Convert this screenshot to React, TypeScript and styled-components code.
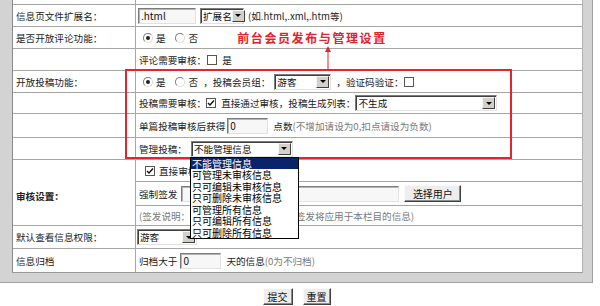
import React from 'react';
import styled, { createGlobalStyle } from 'styled-components';

const GlobalStyle = createGlobalStyle`
  html, body {
    margin: 0;
    padding: 0;
    background: #fff;
  }
  body {
    font-family: "Noto Sans CJK SC", "Liberation Sans", sans-serif;
    font-size: 9.6px;
    color: #222;
  }
`;

const Frame = styled.div`
  position: relative;
  width: 593px;
  box-sizing: border-box;
  background: #d3d3d3;
  padding: 0 9px 9px 12px;
  border-right: 1px solid #a0a0a0;
  border-bottom: 1px solid #a0a0a0;
`;

const Table = styled.div`
  background: #fff;
  border-left: 1px solid #8a8a8a;
  border-right: 1px solid #b0b0b0;
  border-bottom: 1px solid #9a9a9a;
`;

const Row = styled.div<{ $h: number }>`
  display: grid;
  grid-template-columns: 123px 1fr;
  box-sizing: border-box;
  height: ${(p) => p.$h}px;
  border-bottom: 1px solid #a6a6a6;

  &:last-child {
    border-bottom: none;
  }
`;

const LabelCell = styled.div<{ $bold?: boolean }>`
  display: flex;
  align-items: center;
  padding: ${(p) => (p.$bold ? '6px 0 0 3px' : '0 0 0 3px')};
  border-right: 1px solid #a6a6a6;
  font-weight: ${(p) => (p.$bold ? 'bold' : 'normal')};
  white-space: nowrap;
`;

const ValueCell = styled.div`
  display: flex;
  align-items: center;
  padding-left: 2px;
  white-space: nowrap;
  min-width: 0;
`;

const StackCell = styled.div`
  display: flex;
  flex-direction: column;
`;

const SubRow = styled.div<{ $h: number; $last?: boolean }>`
  display: flex;
  align-items: center;
  box-sizing: border-box;
  height: ${(p) => p.$h}px;
  padding-left: 2px;
  white-space: nowrap;
  border-bottom: ${(p) => (p.$last ? 'none' : '1px solid #a6a6a6')};
`;

const Text = styled.span<{ $ml?: number; $muted?: boolean }>`
  margin-left: ${(p) => p.$ml ?? 0}px;
  color: ${(p) => (p.$muted ? '#7a7a7a' : '#222')};
`;

const Title = styled.span<{ $ml: number }>`
  margin-left: ${(p) => p.$ml}px;
  color: #e2232b;
  font-size: 12px;
  font-weight: bold;
  letter-spacing: 1.6px;
`;

const TextBox = styled.input<{ $w: number; $ml?: number }>`
  box-sizing: border-box;
  width: ${(p) => p.$w}px;
  height: 16px;
  margin: 0 0 0 ${(p) => p.$ml ?? 0}px;
  padding: 0 2px;
  border: 1px solid;
  border-color: #7c7c7c #e2e2e2 #e2e2e2 #7c7c7c;
  box-shadow: inset 1px 1px 0 #b4b4b4;
  background: #f7f7f7;
  font-family: inherit;
  font-size: 10px;
  color: #111;
  outline: none;
`;

const SelectBox = styled.div<{ $w: number; $ml?: number }>`
  position: relative;
  display: inline-flex;
  align-items: center;
  box-sizing: border-box;
  width: ${(p) => p.$w}px;
  height: 16px;
  margin-left: ${(p) => p.$ml ?? 0}px;
  padding-left: 2px;
  background: #fff;
  border: 1px solid;
  border-color: #7c7c7c #e2e2e2 #e2e2e2 #7c7c7c;
  box-shadow: inset 1px 1px 0 #404040;
  font-size: 9.6px;
  color: #111;
  white-space: nowrap;
`;

const SelectArrow = styled.span`
  display: flex;
  flex: none;
  align-items: center;
  justify-content: center;
  box-sizing: border-box;
  width: 13px;
  height: 12px;
  margin: 0 1px 0 auto;
  background: #d4d0c8;
  border: 1px solid;
  border-color: #f4f4f4 #404040 #404040 #f4f4f4;

  &::after {
    content: '';
    border-left: 3px solid transparent;
    border-right: 3px solid transparent;
    border-top: 3px solid #000;
  }
`;

const DropList = styled.ul`
  position: absolute;
  top: calc(100% + 1px);
  left: -2px;
  z-index: 3;
  width: 107px;
  margin: 0;
  padding: 0;
  list-style: none;
  background: #fff;
  border: 1px solid #000;
`;

const DropItem = styled.li<{ $active?: boolean }>`
  height: 11.5px;
  line-height: 11.5px;
  padding-left: 1px;
  font-size: 10px;
  white-space: nowrap;
  color: ${(p) => (p.$active ? '#fff' : '#000')};
  background: ${(p) => (p.$active ? '#0a246a' : 'transparent')};
`;

const Radio = styled.span<{ $checked?: boolean; $ml?: number }>`
  display: inline-flex;
  align-items: center;
  justify-content: center;
  box-sizing: border-box;
  width: 10px;
  height: 10px;
  margin-left: ${(p) => p.$ml ?? 0}px;
  border-radius: 50%;
  border: 1px solid;
  border-color: #7a7a7a #dcdcdc #dcdcdc #7a7a7a;
  background: #fff;

  &::after {
    content: '';
    width: 4px;
    height: 4px;
    border-radius: 50%;
    background: ${(p) => (p.$checked ? '#222' : 'transparent')};
  }
`;

const CheckBox = styled.span<{ $ml?: number }>`
  display: inline-flex;
  align-items: center;
  justify-content: center;
  box-sizing: border-box;
  width: 10px;
  height: 10px;
  margin-left: ${(p) => p.$ml ?? 0}px;
  border: 1px solid #555;
  background: #fff;
`;

const ClassicButton = styled.button<{ $w: number; $ml?: number }>`
  box-sizing: border-box;
  width: ${(p) => p.$w}px;
  height: 17px;
  margin-left: ${(p) => p.$ml ?? 0}px;
  padding: 0;
  background: #ededed;
  border: 1px solid;
  border-color: #fafafa #404040 #404040 #fafafa;
  box-shadow: inset -1px -1px 0 #8c8c8c;
  font-family: inherit;
  font-size: 10px;
  color: #111;
`;

const ButtonBar = styled.div`
  display: flex;
  justify-content: center;
  gap: 10px;
  width: 593px;
  padding-top: 5px;
`;

const RedBox = styled.div`
  position: absolute;
  left: 125px;
  top: 69px;
  width: 387px;
  height: 90px;
  box-sizing: border-box;
  border: 2px solid #e3262d;
  pointer-events: none;
  z-index: 2;
`;

const Arrow = styled.svg`
  position: absolute;
  left: 324px;
  top: 46px;
  z-index: 2;
`;

const Check: React.FC<{ ml?: number }> = ({ ml }) => (
  <CheckBox $ml={ml}>
    <svg width="8" height="8" viewBox="0 0 8 8">
      <path d="M1 4 L3 6 L7 1.5" fill="none" stroke="#111" strokeWidth="1.4" />
    </svg>
  </CheckBox>
);

const Select: React.FC<{ w: number; ml?: number; value: string; children?: React.ReactNode }> = ({
  w,
  ml,
  value,
  children,
}) => (
  <SelectBox $w={w} $ml={ml}>
    {value}
    <SelectArrow />
    {children}
  </SelectBox>
);

const manageOptions = [
  '不能管理信息',
  '可管理未审核信息',
  '只可编辑未审核信息',
  '只可删除未审核信息',
  '可管理所有信息',
  '只可编辑所有信息',
  '只可删除所有信息',
];

export default function App() {
  return (
    <>
      <GlobalStyle />
      <Frame>
        <Table>
          <Row $h={5}>
            <LabelCell />
            <ValueCell />
          </Row>
          <Row $h={22}>
            <LabelCell>信息页文件扩展名：</LabelCell>
            <ValueCell>
              <TextBox $w={58} defaultValue=".html" />
              <Select w={44} ml={4} value="扩展名" />
              <Text $ml={4}>(如.html,.xml,.htm等)</Text>
            </ValueCell>
          </Row>
          <Row $h={22}>
            <LabelCell>是否开放评论功能：</LabelCell>
            <ValueCell>
              <Radio $checked $ml={5} />
              <Text $ml={3}>是</Text>
              <Radio $ml={9} />
              <Text $ml={4}>否</Text>
              <Title $ml={39}>前台会员发布与管理设置</Title>
            </ValueCell>
          </Row>
          <Row $h={22}>
            <LabelCell />
            <ValueCell>
              <Text $ml={1}>评论需要审核：</Text>
              <CheckBox $ml={1} />
              <Text $ml={5}>是</Text>
            </ValueCell>
          </Row>
          <Row $h={22}>
            <LabelCell>开放投稿功能：</LabelCell>
            <ValueCell>
              <Radio $checked $ml={5} />
              <Text $ml={3}>是</Text>
              <Radio $ml={9} />
              <Text $ml={4}>否</Text>
              <Text $ml={5}>，投稿会员组：</Text>
              <Select w={57} ml={4} value="游客" />
              <Text $ml={5}>，验证码验证：</Text>
              <CheckBox />
            </ValueCell>
          </Row>
          <Row $h={21}>
            <LabelCell />
            <ValueCell>
              <Text $ml={1}>投稿需要审核：</Text>
              <Check />
              <Text $ml={5}>直接通过审核</Text>
              <Text>，投稿生成列表：</Text>
              <Select w={142} value="不生成" />
            </ValueCell>
          </Row>
          <Row $h={24}>
            <LabelCell />
            <ValueCell>
              <Text $ml={1}>单篇投稿审核后获得</Text>
              <TextBox $w={41} $ml={2} defaultValue="0" />
              <Text $ml={5}>点数</Text>
              <Text $muted>(不增加请设为0,扣点请设为负数)</Text>
            </ValueCell>
          </Row>
          <Row $h={22}>
            <LabelCell />
            <ValueCell>
              <Text $ml={1}>管理投稿：</Text>
              <Select w={102} ml={4} value="不能管理信息">
                <DropList>
                  {manageOptions.map((o, i) => (
                    <DropItem key={o} $active={i === 0}>
                      {o}
                    </DropItem>
                  ))}
                </DropList>
              </Select>
            </ValueCell>
          </Row>
          <Row $h={66}>
            <LabelCell $bold>审核设置：</LabelCell>
            <StackCell>
              <SubRow $h={22}>
                <Check ml={7} />
                <Text $ml={4}>直接审核</Text>
              </SubRow>
              <SubRow $h={24}>
                <Text $ml={1}>强制签发</Text>
                <TextBox $w={218} $ml={4} defaultValue="" />
                <ClassicButton $w={57} $ml={5}>
                  选择用户
                </ClassicButton>
              </SubRow>
              <SubRow $h={19} $last>
                <Text $ml={1} $muted>
                  (签发说明：如设置了强制签发人，则签发将应用于本栏目的信息)
                </Text>
              </SubRow>
            </StackCell>
          </Row>
          <Row $h={23}>
            <LabelCell>默认查看信息权限：</LabelCell>
            <ValueCell>
              <Select w={60} ml={-1} value="游客" />
            </ValueCell>
          </Row>
          <Row $h={23}>
            <LabelCell>信息归档</LabelCell>
            <ValueCell>
              <Text $ml={1}>归档大于</Text>
              <TextBox $w={41} $ml={3} defaultValue="0" />
              <Text $ml={5}>天的信息</Text>
              <Text $muted>(0为不归档)</Text>
            </ValueCell>
          </Row>
        </Table>
        <RedBox />
        <Arrow width="8" height="24" viewBox="0 0 8 24">
          <line x1="4" y1="4" x2="4" y2="24" stroke="#e2232b" strokeWidth="1" />
          <polygon points="4,0 1,6 7,6" fill="#e2232b" />
        </Arrow>
      </Frame>
      <ButtonBar>
        <ClassicButton $w={30}>提交</ClassicButton>
        <ClassicButton $w={28}>重置</ClassicButton>
      </ButtonBar>
    </>
  );
}
